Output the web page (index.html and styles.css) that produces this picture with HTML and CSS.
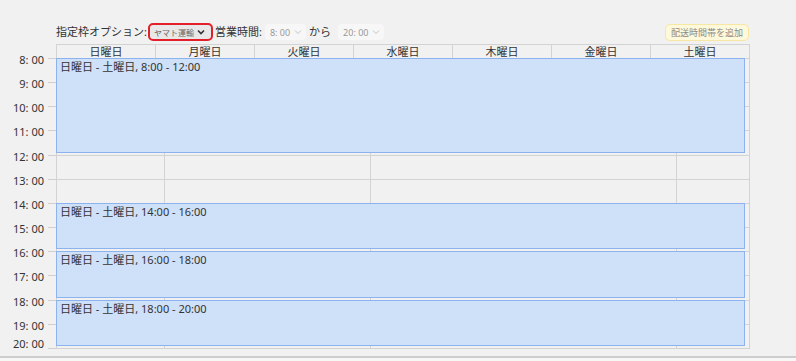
FILE: index.html
```html
<!DOCTYPE html>
<html lang="ja">
<head>
    <meta charset="UTF-8">
    <meta name="viewport" content="width=device-width, initial-scale=1.0">
    <title>配送時間帯</title>
    <link rel="stylesheet" href="styles.css">
</head>
<body>

<div class="page">
    <div class="toolbar">
        <span class="label">指定枠オプション:</span>
        <div class="select select-carrier">
            <span>ヤマト運輸</span>
            <svg width="8" height="6" viewBox="0 0 8 6"><path d="M1 1.5 L4 4.5 L7 1.5" fill="none" stroke="#333" stroke-width="1.6"/></svg>
        </div>
        <span class="label">営業時間:</span>
        <div class="select select-time">
            <span>8: 00</span>
            <svg width="8" height="6" viewBox="0 0 8 6"><path d="M1 1.5 L4 4.5 L7 1.5" fill="none" stroke="#c4c4c4" stroke-width="1"/></svg>
        </div>
        <span class="label label-from">から</span>
        <div class="select select-time">
            <span>20: 00</span>
            <svg width="8" height="6" viewBox="0 0 8 6"><path d="M1 1.5 L4 4.5 L7 1.5" fill="none" stroke="#c4c4c4" stroke-width="1"/></svg>
        </div>
        <button class="add-btn">配送時間帯を追加</button>
    </div>

    <div class="calendar">
        <div class="times">
            <div class="time-row"><span>8: 00</span><i></i></div>
            <div class="time-row"><span>9: 00</span><i></i></div>
            <div class="time-row"><span>10: 00</span><i></i></div>
            <div class="time-row"><span>11: 00</span><i></i></div>
            <div class="time-row"><span>12: 00</span><i></i></div>
            <div class="time-row"><span>13: 00</span><i></i></div>
            <div class="time-row"><span>14: 00</span><i></i></div>
            <div class="time-row"><span>15: 00</span><i></i></div>
            <div class="time-row"><span>16: 00</span><i></i></div>
            <div class="time-row"><span>17: 00</span><i></i></div>
            <div class="time-row"><span>18: 00</span><i></i></div>
            <div class="time-row"><span>19: 00</span><i></i></div>
            <div class="time-row"><span>20: 00</span><i></i></div>
        </div>

        <div class="week">
            <div class="head">
                <div class="day">日曜日</div>
                <div class="day">月曜日</div>
                <div class="day">火曜日</div>
                <div class="day">水曜日</div>
                <div class="day">木曜日</div>
                <div class="day">金曜日</div>
                <div class="day">土曜日</div>
            </div>

            <div class="body">
                <div class="lines">
                    <!-- 12 hour rows x 4 cells -->
                    <div></div><div></div><div></div><div></div>
                    <div></div><div></div><div></div><div></div>
                    <div></div><div></div><div></div><div></div>
                    <div></div><div></div><div></div><div></div>
                    <div></div><div></div><div></div><div></div>
                    <div></div><div></div><div></div><div></div>
                    <div></div><div></div><div></div><div></div>
                    <div></div><div></div><div></div><div></div>
                    <div></div><div></div><div></div><div></div>
                    <div></div><div></div><div></div><div></div>
                    <div></div><div></div><div></div><div></div>
                    <div></div><div></div><div></div><div></div>
                </div>
                <div class="slots">
                    <div class="slot" style="grid-row: 1 / 5">日曜日 - 土曜日, 8:00 - 12:00</div>
                    <div class="slot" style="grid-row: 7 / 9">日曜日 - 土曜日, 14:00 - 16:00</div>
                    <div class="slot" style="grid-row: 9 / 11">日曜日 - 土曜日, 16:00 - 18:00</div>
                    <div class="slot" style="grid-row: 11 / 13">日曜日 - 土曜日, 18:00 - 20:00</div>
                </div>
            </div>
        </div>
    </div>
</div>

</body>
</html>
```

FILE: styles.css
```css
body {
    margin: 0;
    background-color: #f7f7f7;
    font-family: "Noto Sans", "Noto Sans CJK JP", sans-serif;
    font-size: 11px;
    color: #333;
}

.page {
    height: 358px;
    background-color: #f0f1f0;
    border-bottom: 2px solid #cdcdcd;
    box-sizing: border-box;
}

/* toolbar */
.toolbar {
    display: flex;
    align-items: center;
    height: 18px;
    padding: 23px 47px 0 56px;
}

.label {
    line-height: 18px;
    white-space: nowrap;
}

.label-from {
    margin: 0 4px 0 3px;
}

.select {
    display: flex;
    flex-shrink: 0;
    align-items: center;
    justify-content: space-between;
    box-sizing: border-box;
    font-size: 9px;
    white-space: nowrap;
}

.select-carrier {
    width: 65px;
    height: 18px;
    margin: 0 2px 0 1px;
    padding: 0 6px 0 4px;
    font-size: 8px;
    background-color: #e8e8e8;
    border: 2px solid #e3202a;
    border-radius: 5px;
    color: #666;
}

.select-time {
    height: 16px;
    margin-left: 3px;
    padding: 0 4px 0 5px;
    gap: 4px;
    background-color: #f7f7f7;
    border-radius: 4px;
    color: #999;
}

.add-btn {
    margin-left: auto;
    height: 17px;
    padding: 0 5px;
    font-family: inherit;
    font-size: 9px;
    color: #8a8a8a;
    background-color: #fff9dc;
    border: 1px solid #f6e7a2;
    border-radius: 5px;
}

/* calendar */
.calendar {
    display: flex;
    margin-top: 3px;
}

.times {
    display: flex;
    flex-direction: column;
    justify-content: space-between;
    width: 56px;
    height: 290px;
    margin-top: 14px;
}

.time-row {
    display: flex;
    align-items: flex-start;
    height: 0;
}

.time-row span {
    width: 44px;
    margin-top: -5px;
    line-height: 14px;
    text-align: right;
}

.time-row:last-child span {
    margin-top: -11px;
}

.time-row i {
    width: 8px;
    height: 1px;
    margin-left: 4px;
    background-color: #cfcfcf;
}

.week {
    width: 694px;
}

.head {
    display: grid;
    grid-template-columns: repeat(7, 99px);
    border-top: 1px solid #d3d3d3;
    border-left: 1px solid #d3d3d3;
}

.day {
    height: 14px;
    line-height: 14px;
    text-align: center;
    border-right: 1px solid #d3d3d3;
    border-bottom: 1px solid #d3d3d3;
    box-sizing: border-box;
}

.body {
    display: grid;
    height: 290px;
    border-left: 1px solid #d3d3d3;
}

.lines, .slots {
    grid-area: 1 / 1;
    display: grid;
    grid-template-rows: repeat(12, 1fr);
}

.lines {
    grid-template-columns: 108px 206px 306px 73px;
}

.lines div {
    border-right: 1px solid #d3d3d3;
    border-bottom: 1px solid #d3d3d3;
}

.slot {
    grid-column: 1;
    margin: -1px 5px 3px -1px;
    padding: 1px 3px;
    line-height: 14px;
    background-color: #cfe0f9;
    border: 1px solid #8db3ef;
}
```
